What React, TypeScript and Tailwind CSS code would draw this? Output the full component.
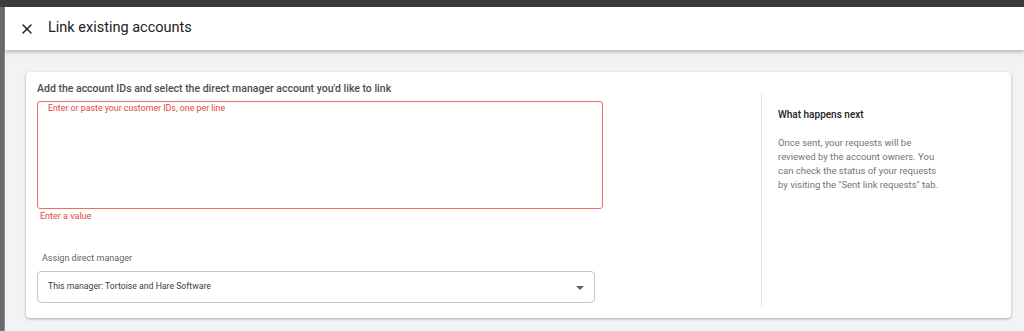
import { X } from "lucide-react";

export default function App() {
  return (
    <div className="w-[1024px] h-[331px] overflow-hidden flex flex-col bg-[#3c3c3c] font-['Roboto',sans-serif]">
      <div className="h-[7px] shrink-0" />
      <div className="flex flex-1 min-h-0">
        {/* Left edge strip */}
        <div className="w-[5px] shrink-0 bg-[#6b6b6b] border-r border-[#8a8a8a]" />
        <div className="flex-1 flex flex-col bg-[#f1f3f4] min-w-0">
          {/* Header */}
          <div className="h-[43px] shrink-0 bg-white flex items-center pl-[14px] shadow-[0_2px_4px_rgba(0,0,0,0.25)] relative z-10">
            <X className="w-[16px] h-[16px] text-[#202124]" strokeWidth={2.2} />
            <span className="ml-[13px] text-[14.5px] text-[#202124] leading-none">Link existing accounts</span>
          </div>

          {/* Card */}
          <div className="pt-[22px] pl-[21px] pr-[13px]">
            <div className="h-[246px] bg-white rounded-[4px] shadow-[0_1px_3px_rgba(0,0,0,0.3)] flex pl-[11px] pt-[11px]">
              <div className="w-[566px] shrink-0 flex flex-col">
                <div className="text-[10.5px] font-medium text-[#4a4d51] leading-[12px]">
                  Add the account IDs and select the direct manager account you'd like to link
                </div>
                <div className="mt-[6px] h-[108px] border border-[#ee6f66] rounded-[3px] pl-[10px] pt-[1px]">
                  <div className="text-[8.8px] text-[#e0463a] leading-[11px]">
                    Enter or paste your customer IDs, one per line
                  </div>
                </div>
                <div className="mt-[2px] pl-[3px] text-[9px] text-[#e0463a] leading-[11px]">Enter a value</div>
                <div className="mt-[31px] pl-[5px] text-[9px] text-[#5f6368] leading-[11px]">Assign direct manager</div>
                <div className="mt-[7px] w-[558px] h-[32px] border border-[#c4c7ca] rounded-[4px] flex items-center justify-between pl-[10px] pr-[10px]">
                  <span className="text-[8.7px] text-[#3c4043]">This manager: Tortoise and Hare Software</span>
                  <svg width="8" height="4" viewBox="0 0 8 4" className="mt-[1px]">
                    <path d="M0 0h8L4 4z" fill="#5f6368" />
                  </svg>
                </div>
              </div>
              <div className="ml-[158px] mt-[11px] mb-[12px] border-l border-[#e3e5e8] pl-[16px] pt-[15px]">
                <div className="text-[10px] font-medium text-[#202124] leading-[12px]">What happens next</div>
                <p className="mt-[15px] w-[170px] text-[9.5px] text-[#70757a] leading-[14px]">
                  Once sent, your requests will be reviewed by the account owners. You can check the status of your requests by visiting the "Sent link requests" tab.
                </p>
              </div>
            </div>
          </div>
        </div>
      </div>
    </div>
  );
}
